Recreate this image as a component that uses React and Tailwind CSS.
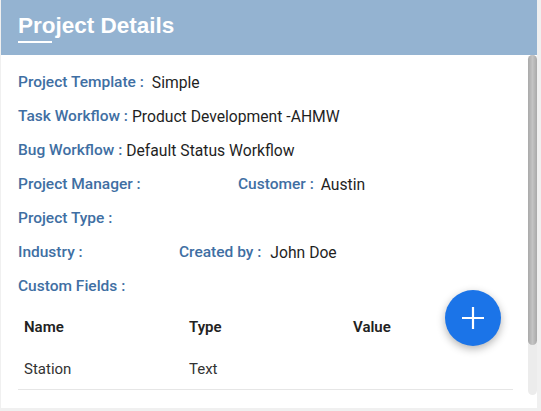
import React from "react";

const label = "text-[15.5px] font-medium text-[#3f6fa3]";
const value = "text-[15.7px] text-[#1f1f1f]";

function Row({ children }) {
  return <div className="flex h-[34px] items-center">{children}</div>;
}

export default function App() {
  return (
    <div
      className="h-[411px] w-[541px] overflow-hidden bg-[#f0f0f0]"
      style={{ fontFamily: "Roboto, 'Liberation Sans', sans-serif" }}
    >
      <div className="relative ml-px flex h-[408px] w-[536px] flex-col bg-white">
        <header className="h-[55px] shrink-0 bg-[#94b3d1] pl-[17px] pt-[12px]">
          <h1
            className="relative inline-block text-[22.5px] font-bold leading-[28px] text-white"
            style={{ fontFamily: "'Liberation Sans', Arial, sans-serif" }}
          >
            Project Details
            <span className="absolute left-0 top-[29px] h-[2px] w-[34px] bg-white" />
          </h1>
        </header>

        <div className="pl-[17px] pt-[11px] pr-[24px]">
          <Row>
            <span className={label}>Project Template :</span>
            <span className={`${value} ml-[8px]`}>Simple</span>
          </Row>
          <Row>
            <span className={label}>Task Workflow :</span>
            <span className={`${value} ml-[4px]`}>Product Development -AHMW</span>
          </Row>
          <Row>
            <span className={label}>Bug Workflow :</span>
            <span className={`${value} ml-[4px]`}>Default Status Workflow</span>
          </Row>
          <Row>
            <span className={`${label} w-[220px]`}>Project Manager :</span>
            <span className={label}>Customer :</span>
            <span className={`${value} ml-[7px]`}>Austin</span>
          </Row>
          <Row>
            <span className={label}>Project Type :</span>
          </Row>
          <Row>
            <span className={`${label} w-[161px]`}>Industry :</span>
            <span className={label}>Created by :</span>
            <span className={`${value} ml-[9px]`}>John Doe</span>
          </Row>
          <Row>
            <span className={label}>Custom Fields :</span>
          </Row>

          <table className="mt-[1px] w-[495px] table-fixed border-collapse text-left">
            <thead>
              <tr className="h-[44px]">
                <th className="w-[165px] pl-[6px] text-[15px] font-semibold text-[#222]">Name</th>
                <th className="w-[164px] pl-[6px] text-[15px] font-semibold text-[#222]">Type</th>
                <th className="pl-[6px] text-[15px] font-semibold text-[#222]">Value</th>
              </tr>
            </thead>
            <tbody>
              <tr className="h-[40px] border-b border-[#e6e6e6]">
                <td className="pl-[6px] text-[15px] text-[#333]">Station</td>
                <td className="pl-[6px] text-[15px] text-[#333]">Text</td>
                <td className="pl-[6px] text-[15px] text-[#333]"></td>
              </tr>
            </tbody>
          </table>
        </div>

        {/* scrollbar */}
        <div className="absolute left-[527px] top-[55px] h-[340px] w-[9px] rounded-full bg-[#ececec]">
          <div className="h-[290px] w-full rounded-full bg-gradient-to-r from-[#a9a9a9] via-[#c4c4c4] to-[#a9a9a9]" />
        </div>

        {/* fab */}
        <button
          type="button"
          className="absolute left-[444px] top-[290px] flex h-[56px] w-[56px] items-center justify-center rounded-full bg-[#1b74e8] shadow-[0_3px_8px_rgba(0,0,0,0.3)]"
        >
          <svg width="24" height="24" viewBox="0 0 24 24" fill="none" stroke="white" strokeWidth="2.2">
            <path d="M12 1v22M1 12h22" />
          </svg>
        </button>
      </div>
    </div>
  );
}
